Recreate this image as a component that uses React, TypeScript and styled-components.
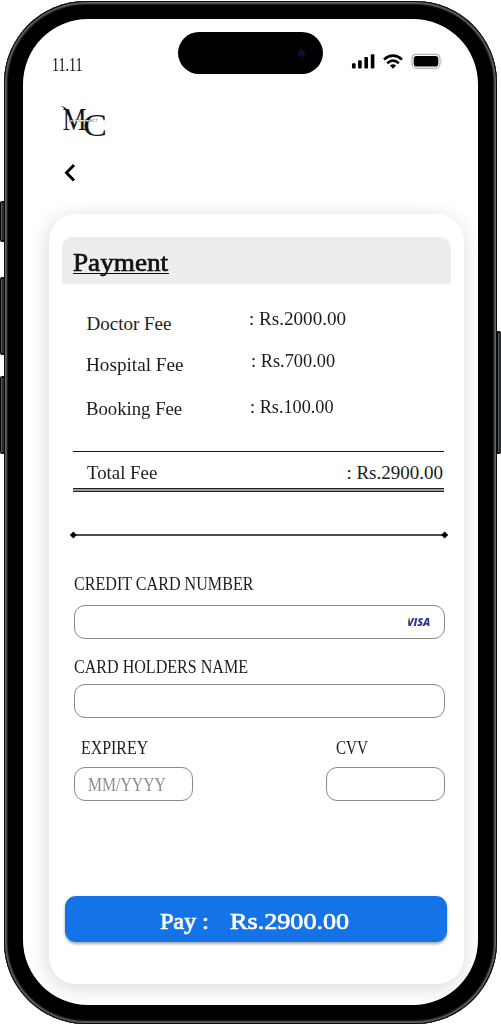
import React from "react";
import styled, { createGlobalStyle } from "styled-components";

const Global = createGlobalStyle`
  *, *::before, *::after { box-sizing: border-box; }
  body { margin: 0; background: #fff; font-family: "Liberation Serif", "Times New Roman", serif; color: #1c1c1c; }
`;

const Stage = styled.div`
  width: 501px;
  height: 1024px;
  display: grid;
  grid-template-columns: 4px 493px 4px;
  overflow: hidden;
  background: #fff;
`;

const KeyRail = styled.div<{ $top: number }>`
  display: flex;
  flex-direction: column;
  padding-top: ${(p) => p.$top}px;
`;

const Key = styled.div<{ $h: number; $gap?: number; $right?: boolean }>`
  height: ${(p) => p.$h}px;
  margin-top: ${(p) => p.$gap ?? 0}px;
  background: linear-gradient(to right, #080808 0 1px, #55585b 1px 2px, #2a2e30 2px);
  border-top: 2px solid #111;
  border-bottom: 2px solid #111;
  border-radius: ${(p) => (p.$right ? "0 2px 2px 0" : "2px 0 0 2px")};
`;

const Frame = styled.div`
  margin-top: 0.5px;
  height: 1023px;
  border-radius: 82px;
  padding: 18.5px 19px 19px;
  background: #000;
  box-shadow: inset 0 0 0 1px #0a0a0a, inset 0 0 0 2px #606465, inset 0 0 0 3px #4a4c4e, inset 0 0 0 4px #1c1d1e;
`;

const Screen = styled.main`
  width: 455px;
  height: 985.5px;
  border-radius: 65px;
  background: #fff;
  overflow: hidden;
`;

const StatusBar = styled.header`
  height: 81px;
  display: grid;
  grid-template-columns: 155px 145px 1fr;
  align-items: start;
`;

const Island = styled.div`
  height: 42px;
  margin-top: 13px;
  border-radius: 21px;
  background: #000;
  display: flex;
  align-items: center;
  justify-content: flex-end;
  padding-right: 16px;
`;

const StatusIcons = styled.div`
  padding: 34px 0 0 28px;
`;

const Clock = styled.div`
  padding: 34px 0 0 29px;
`;

const Text = styled.span<{ $size?: number; $x?: number; $semi?: boolean; $color?: string }>`
  display: block;
  width: max-content;
  height: 24px;
  line-height: 24px;
  white-space: pre;
  font-size: ${(p) => p.$size ?? 19}px;
  -webkit-text-stroke: ${(p) => (p.$semi ? "0.7px currentColor" : "0")};
  color: ${(p) => p.$color ?? "inherit"};
  transform: scaleX(${(p) => p.$x ?? 1});
  transform-origin: left center;
`;

const Brand = styled.div`
  height: 62px;
  padding: 4px 0 0 36px;
`;

const Back = styled.button`
  display: block;
  border: 0;
  padding: 0;
  margin: 0 0 0 40px;
  height: 22px;
  background: none;
`;

const Card = styled.section`
  margin: 30px 0 0 26px;
  width: 414.5px;
  height: 770px;
  border-radius: 27px;
  background: #fff;
  box-shadow: -1px 4px 20px 1px rgba(0, 0, 0, 0.14);
  padding: 23px 13px 0;
`;

const TitleBar = styled.div`
  height: 46.5px;
  border-radius: 11px 11px 0 0;
  background: #ededed;
  padding: 13px 0 0 11px;
`;

const Title = styled.h1`
  margin: 0;
  padding-top: 1px;
  width: 95.5px;
  height: 24px;
  border-bottom: 1.5px solid #111;
  color: #111;
  font-weight: 400;
`;

const Fees = styled.div`
  display: flex;
  height: 167px;
`;

const FeeColumn = styled.div<{ $left: number; $top: number; $w: number }>`
  width: ${(p) => p.$w}px;
  padding: ${(p) => p.$top}px 0 0 ${(p) => p.$left}px;
`;

const FeeItem = styled.div<{ $h: number; $indent?: number }>`
  height: ${(p) => p.$h}px;
  padding-left: ${(p) => p.$indent ?? 0}px;
`;

const Total = styled.div`
  margin-left: 10.5px;
  width: 371.5px;
  height: 41px;
  border-top: 1px solid #151515;
  border-bottom: 1px solid #222;
  background: linear-gradient(#222, #222) left bottom 2px / 100% 1px no-repeat,
    linear-gradient(#999, #999) left bottom / 100% 2px no-repeat;
  display: flex;
  justify-content: space-between;
  padding: 9px 1px 0 14px;
`;

const Divider = styled.div`
  height: 8px;
  margin: 39px 0 0 7px;
`;

const Form = styled.form`
  margin-left: 11.5px;
  width: 371.5px;
`;

const Label = styled.label<{ $top: number; $gap: number; $left?: number }>`
  display: block;
  padding: ${(p) => p.$top}px 0 0 ${(p) => p.$left ?? 0.5}px;
  margin-bottom: ${(p) => p.$gap}px;
`;

const Field = styled.div<{ $w?: number }>`
  width: ${(p) => (p.$w ? p.$w + "px" : "100%")};
  height: 34.5px;
  border: 1px solid #8a8a8a;
  border-radius: 11px;
  display: flex;
  align-items: center;
  padding: 2px 13px 0;
`;

const FieldRow = styled.div`
  display: flex;
  justify-content: space-between;
`;

const Visa = styled.span`
  margin: 0 0 2px auto;
  font: italic 800 10.8px/12px "Open Sans", sans-serif;
  letter-spacing: -0.2px;
  padding: 0 1px;
  background: linear-gradient(118deg, #f0a63a 0 4px, #2b3990 5px);
  -webkit-background-clip: text;
  background-clip: text;
  color: transparent;
`;

const PayButton = styled.button`
  display: flex;
  width: 382px;
  height: 46px;
  margin: 95px 0 0 3px;
  padding: 12.5px 0 0 95px;
  border: 0;
  border-radius: 11px;
  background: #1473e6;
  box-shadow: 0 2px 3px rgba(0, 0, 0, 0.35);
  font-family: inherit;
  color: #fff;
`;

const PayLabel = styled.div`
  width: 70px;
`;

function Logo() {
  return (
    <svg width="52" height="40" viewBox="59 104 52 40" fontFamily="Liberation Serif, serif" fill="#151515" style={{ display: "block" }}>
      <path d="M60.5 106.6C64 106 66.3 107.6 68 111.5L70 116L67.5 114.5C66.3 110.5 64.5 107.6 60.5 106.6Z" />
      <text transform="translate(62.5 129.7) scale(.86 1)" fontSize="31.5">M</text>
      <text transform="translate(83 135.5) scale(1.14 1)" fontSize="31.5">C</text>
      <path d="M69 120.7H98" stroke="#fff" strokeWidth="1.6" />
      <text x="69" y="121.6" fontSize="2.8" letterSpacing=".75" fontFamily="Liberation Sans, sans-serif">MEDICONNECT</text>
    </svg>
  );
}

function Signals() {
  return (
    <svg width="94" height="17" viewBox="351 53 94 17" style={{ display: "block" }}>
      <rect x="352" y="63.2" width="3.6" height="5.3" rx="1" />
      <rect x="358.1" y="60.2" width="3.6" height="8.3" rx="1" />
      <rect x="364.4" y="57" width="3.6" height="11.5" rx="1" />
      <rect x="370.8" y="54.2" width="3.6" height="14.3" rx="1" />
      <g fill="none" stroke="#000" strokeWidth="2.6">
        <path d="M384 59.4Q393 51.7 402 59.4" />
        <path d="M387.2 63.2Q393 58 398.8 63.2" />
      </g>
      <path d="M389.9 65.6Q393 63 396.1 65.6L393 68.8Z" />
      <rect x="412" y="54.3" width="28" height="14" rx="4.2" fill="#fff" stroke="#b5b0b0" strokeWidth="1.2" />
      <rect x="413.7" y="56" width="24.6" height="10.6" rx="2.8" />
      <path d="M441.6 59.2Q443.3 61.3 441.6 63.4Z" fill="#aaa" />
    </svg>
  );
}

export default function App() {
  return (
    <Stage>
      <Global />
      <KeyRail $top={201}>
        <Key $h={41} />
        <Key $h={78} $gap={35} />
        <Key $h={78} $gap={21} />
      </KeyRail>
      <Frame>
        <Screen>
          <StatusBar>
            <Clock><Text $x={0.74} $color="#111">11.11</Text></Clock>
            <Island>
              <svg width="11" height="11" viewBox="0 0 11 11">
                <circle cx="5.5" cy="5.5" r="4.5" fill="#08081c" />
                <circle cx="5.5" cy="3.8" r="1.3" fill="#1c1c5c" />
                <circle cx="4" cy="6.5" r="1.1" fill="#18184c" />
                <circle cx="7.2" cy="6.5" r="1.1" fill="#18184c" />
              </svg>
            </Island>
            <StatusIcons><Signals /></StatusIcons>
          </StatusBar>
          <Brand><Logo /></Brand>
          <Back aria-label="Back">
            <svg width="14" height="22" viewBox="63 162 14 22" style={{ display: "block" }}>
              <path d="M74 165L66.5 172.7L74 180.4" fill="none" stroke="#000" strokeWidth="2.9" />
            </svg>
          </Back>
          <Card>
            <TitleBar>
              <Title><Text $size={24.5} $semi $x={1.11}>Payment</Text></Title>
            </TitleBar>
            <Fees>
              <FeeColumn $w={187} $left={23.5} $top={28}>
                <FeeItem $h={41.7} $indent={1}><Text>Doctor Fee</Text></FeeItem>
                <FeeItem $h={44}><Text $x={1.01}>Hospital Fee</Text></FeeItem>
                <FeeItem $h={30}><Text $x={0.985}>Booking Fee</Text></FeeItem>
              </FeeColumn>
              <FeeColumn $w={200} $left={0} $top={23}>
                <FeeItem $h={42.4}><Text $x={1.005}>: Rs.2000.00</Text></FeeItem>
                <FeeItem $h={45.8} $indent={2}><Text $x={0.965}>: Rs.700.00</Text></FeeItem>
                <FeeItem $h={30} $indent={1}><Text $x={0.96}>: Rs.100.00</Text></FeeItem>
              </FeeColumn>
            </Fees>
            <Total>
              <Text $x={0.99}>Total Fee</Text>
              <Text>: Rs.2900.00</Text>
            </Total>
            <Divider>
              <svg width="380" height="8" viewBox="0 0 380 8" style={{ display: "block" }}>
                <path d="M4 4H376" stroke="#111" strokeWidth="1.4" />
                <path d="M1 4L4.3 .7L7.6 4L4.3 7.3ZM372.4 4L375.7 .7L379 4L375.7 7.3Z" stroke="#000" strokeWidth=".4" />
              </svg>
            </Divider>
            <Form>
              <Label $top={33} $gap={9}><Text $size={18.5} $x={0.87}>CREDIT CARD NUMBER</Text></Label>
              <Field><Visa>VISA</Visa></Field>
              <Label $top={15.5} $gap={5}><Text $size={18.5} $x={0.868}>CARD HOLDERS NAME</Text></Label>
              <Field />
              <FieldRow>
                <div>
                  <Label $top={17.5} $gap={7} $left={7.5}><Text $size={18.5} $x={0.86}>EXPIREY</Text></Label>
                  <Field $w={119.5}><Text $x={0.83} $color="#8c8c8c">MM/YYYY</Text></Field>
                </div>
                <div>
                  <Label $top={17.5} $gap={7} $left={10.5}><Text $size={18.5} $x={0.82}>CVV</Text></Label>
                  <Field $w={119.5} />
                </div>
              </FieldRow>
            </Form>
            <PayButton type="button">
              <PayLabel><Text $size={24} $semi>Pay :</Text></PayLabel>
              <Text $size={24} $semi $x={1.09}>Rs.2900.00</Text>
            </PayButton>
          </Card>
        </Screen>
      </Frame>
      <KeyRail $top={331}>
        <Key $h={123} $right />
      </KeyRail>
    </Stage>
  );
}
